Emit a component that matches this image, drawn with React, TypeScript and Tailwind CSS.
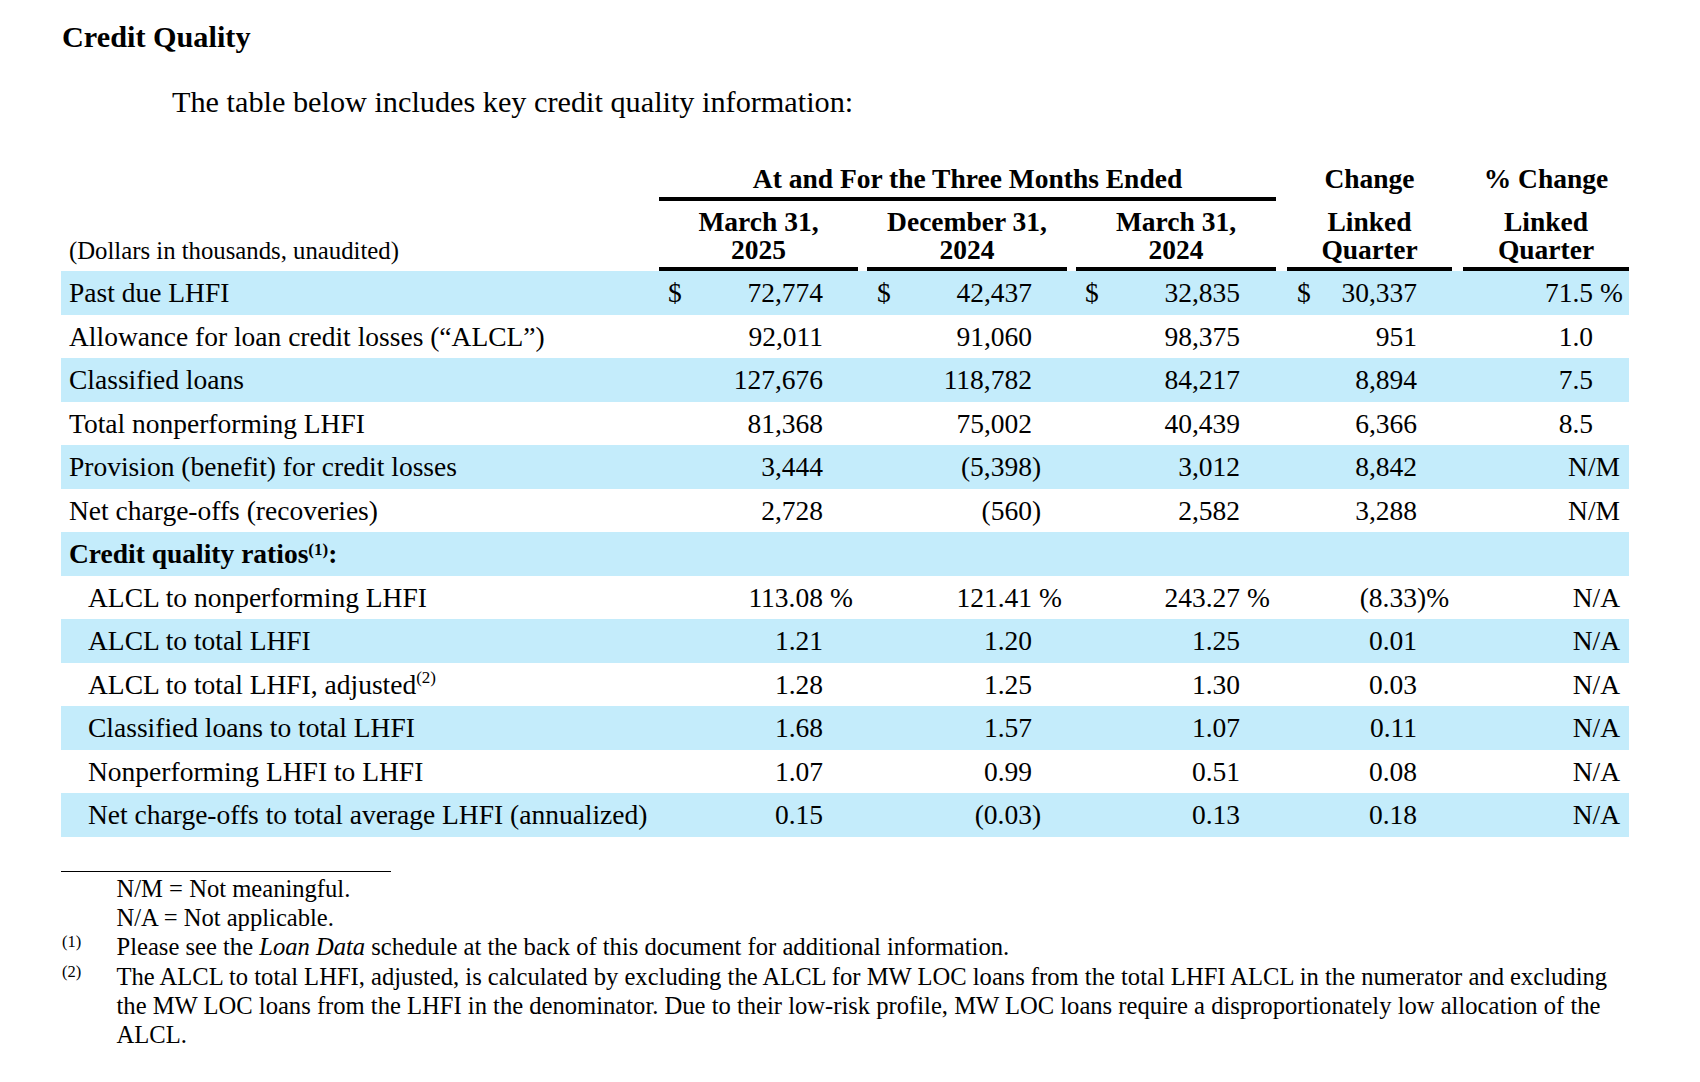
import React from "react";

type Row = {
  label: React.ReactNode;
  vals?: string[];
  dollar?: boolean;
  indent?: boolean;
  bold?: boolean;
};

const rows: Row[] = [
  { label: "Past due LHFI", dollar: true, vals: ["72,774", "42,437", "32,835", "30,337", "71.5 %"] },
  { label: "Allowance for loan credit losses (“ALCL”)", vals: ["92,011", "91,060", "98,375", "951", "1.0"] },
  { label: "Classified loans", vals: ["127,676", "118,782", "84,217", "8,894", "7.5"] },
  { label: "Total nonperforming LHFI", vals: ["81,368", "75,002", "40,439", "6,366", "8.5"] },
  { label: "Provision (benefit) for credit losses", vals: ["3,444", "(5,398)", "3,012", "8,842", "N/M"] },
  { label: "Net charge-offs (recoveries)", vals: ["2,728", "(560)", "2,582", "3,288", "N/M"] },
  {
    label: (
      <>
        Credit quality ratios<sup className="text-[17px] top-[-8.5px]">(1)</sup>:
      </>
    ),
    bold: true,
  },
  { label: "ALCL to nonperforming LHFI", indent: true, vals: ["113.08 %", "121.41 %", "243.27 %", "(8.33)%", "N/A"] },
  { label: "ALCL to total LHFI", indent: true, vals: ["1.21", "1.20", "1.25", "0.01", "N/A"] },
  {
    label: (
      <>
        ALCL to total LHFI, adjusted<sup className="text-[17px] top-[-11px]">(2)</sup>
      </>
    ),
    indent: true,
    vals: ["1.28", "1.25", "1.30", "0.03", "N/A"],
  },
  { label: "Classified loans to total LHFI", indent: true, vals: ["1.68", "1.57", "1.07", "0.11", "N/A"] },
  { label: "Nonperforming LHFI to LHFI", indent: true, vals: ["1.07", "0.99", "0.51", "0.08", "N/A"] },
  { label: "Net charge-offs to total average LHFI (annualized)", indent: true, vals: ["0.15", "(0.03)", "0.13", "0.18", "N/A"] },
];

// widths / paddings per value column (cell includes the gap after its underline)
const cols = [
  { w: "w-[208px]", gap: "pr-[9px]", dol: "pl-[9px]", sfx: "w-[44px]" },
  { w: "w-[209px]", gap: "pr-[9px]", dol: "pl-[10px]", sfx: "w-[44px]" },
  { w: "w-[211px]", gap: "pr-[11px]", dol: "pl-[9px]", sfx: "w-[47px]" },
  { w: "w-[176px]", gap: "pr-[11px]", dol: "pl-[10px]", sfx: "w-[46px]" },
  { w: "w-[166px]", gap: "pr-0", dol: "pl-0", sfx: "w-[36px]" },
];

const heads = [
  ["March 31,", "2025"],
  ["December 31,", "2024"],
  ["March 31,", "2024"],
  ["Linked", "Quarter"],
  ["Linked", "Quarter"],
];

function split(v: string): [string, string] {
  if (v.endsWith(")%")) return [v.slice(0, -2), ")%"];
  if (v.endsWith(" %")) return [v.slice(0, -2), "\u00a0%"];
  if (v.endsWith(")")) return [v.slice(0, -1), ")"];
  return [v, ""];
}

function ValueCell({ v, dollar, ci }: { v?: string; dollar?: boolean; ci: number }) {
  const c = cols[ci];
  if (!v) return <div className={c.w} />;
  if (v === "N/A" || v === "N/M") {
    return (
      <div className={`${c.w} flex`}>
        <span className="flex-1 text-right pr-[9px]">{v}</span>
      </div>
    );
  }
  const [num, sfx] = split(v);
  return (
    <div className={`${c.w} flex`}>
      {dollar && ci < 4 ? <span className={c.dol}>$</span> : null}
      <span className="flex-1 text-right">{num}</span>
      <span className={`${c.sfx} text-left`}>{sfx}</span>
    </div>
  );
}

export default function App() {
  return (
    <div
      className="min-h-screen bg-white text-black pl-[61px] pt-[20px]"
      style={{ fontFamily: '"Liberation Serif", "Times New Roman", serif' }}
    >
      <h1 className="pl-[1px] text-[30.25px] leading-[34px] font-bold">Credit Quality</h1>
      <p className="mt-[31px] pl-[111px] text-[30.25px] leading-[34px]">
        The table below includes key credit quality information:
      </p>

      <div className="mt-[45px] w-[1568px] text-[27.5px] whitespace-nowrap">
        {/* header line 1 */}
        <div className="flex font-bold leading-[30px]">
          <div className="w-[598px]" />
          <div className="w-[628px] pr-[11px]">
            <div className="border-b-4 border-black pb-[3px] text-center">At and For the Three Months Ended</div>
          </div>
          <div className="w-[176px] pr-[11px] text-center">Change</div>
          <div className="w-[166px] text-center">% Change</div>
        </div>

        {/* header line 2 */}
        <div className="flex items-end">
          <div className="w-[598px] pl-[8px] pb-[6px] text-[24.75px] leading-[28px]">
            (Dollars in thousands, unaudited)
          </div>
          {heads.map((h, i) => (
            <div key={i} className={`${cols[i].w} ${cols[i].gap}`}>
              <div className="border-b-4 border-black pt-[7px] pb-[3px] text-center font-bold leading-[28px]">
                {h[0]}
                <br />
                {h[1]}
              </div>
            </div>
          ))}
        </div>

        {/* body */}
        {rows.map((r, ri) => (
          <div
            key={ri}
            className={`flex h-[43.5px] pt-[1px] leading-[42.5px] ${ri % 2 === 0 ? "bg-[#c4ecfb]" : "bg-white"}`}
          >
            <div className={`w-[598px] ${r.indent ? "pl-[27px]" : "pl-[8px]"} ${r.bold ? "font-bold" : ""}`}>
              {r.label}
            </div>
            {[0, 1, 2, 3, 4].map((ci) => (
              <ValueCell key={ci} ci={ci} v={r.vals?.[ci]} dollar={r.dollar} />
            ))}
          </div>
        ))}
      </div>

      {/* footnotes */}
      <div className="mt-[34.5px] h-px w-[330px] bg-black" />
      <div className="mt-[2px] text-[24.6px] leading-[29.2px]">
        <div className="flex">
          <div className="w-[55.5px]" />
          <div>N/M = Not meaningful.</div>
        </div>
        <div className="flex">
          <div className="w-[55.5px]" />
          <div>N/A = Not applicable.</div>
        </div>
        <div className="flex">
          <div className="w-[55.5px] pl-[1px] pt-[2px] text-[16.5px] leading-[16px]">(1)</div>
          <div>
            Please see the <i>Loan Data</i> schedule at the back of this document for additional information.
          </div>
        </div>
        <div className="flex">
          <div className="w-[55.5px] pl-[1px] pt-[2px] text-[16.5px] leading-[16px]">(2)</div>
          <div className="w-[1505px]">
            The ALCL to total LHFI, adjusted, is calculated by excluding the ALCL for MW LOC loans from the total LHFI
            ALCL in the numerator and excluding the MW LOC loans from the LHFI in the denominator. Due to their
            low-risk profile, MW LOC loans require a disproportionately low allocation of the ALCL.
          </div>
        </div>
      </div>
    </div>
  );
}
